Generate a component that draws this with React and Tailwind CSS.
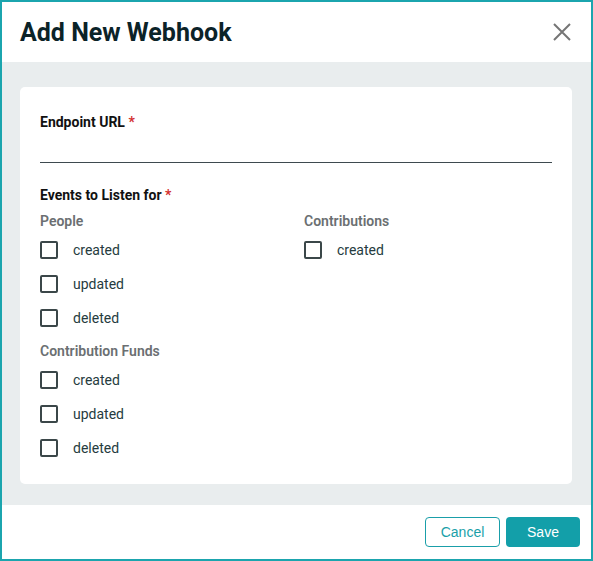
const groups = [
  { title: 'People', events: ['created', 'updated', 'deleted'] },
  { title: 'Contributions', events: ['created'] },
  { title: 'Contribution Funds', events: ['created', 'updated', 'deleted'] },
]

function Check({ label }) {
  return (
    <label className="flex items-center h-[34px] cursor-pointer">
      <span className="w-[18px] h-[18px] border-2 border-[#3b4749] rounded-[2px] shrink-0" />
      <span className="ml-[15px] text-[14px] text-[#263b40]">{label}</span>
    </label>
  )
}

function Group({ group }) {
  return (
    <div>
      <div className="text-[14px] leading-5 font-semibold text-[#6b6f72] mb-[2px]">{group.title}</div>
      {group.events.map((e) => (
        <Check key={e} label={e} />
      ))}
    </div>
  )
}

export default function App() {
  return (
    <div className="w-[593px] h-[561px] bg-white border-2 border-[#1ba5ae] flex flex-col font-['Roboto',sans-serif]">
      <div className="h-[60px] flex items-center justify-between pl-[18px] pr-[19px] pt-[2px] shrink-0">
        <h1 className="text-[25px] font-bold text-[#0b2328]">Add New Webhook</h1>
        <button className="text-[#757575] -mt-[2px]">
          <svg width="20" height="20" viewBox="0 0 20 20" fill="none" stroke="currentColor" strokeWidth="2">
            <path d="M2 2 L18 18 M18 2 L2 18" />
          </svg>
        </button>
      </div>

      <div className="bg-[#e9edee] h-[443px] pl-[18px] pr-[19px] pt-[25px] shrink-0">
        <div className="bg-white rounded-[5px] h-[397px] px-5 pt-[25px]">
          <div className="text-[14px] leading-5 font-bold text-[#111]">
            Endpoint URL <span className="text-[#d32f2f]">*</span>
          </div>
          <input className="block w-full h-[31px] border-b border-[#3e4a4f] outline-none" />

          <div className="mt-[22px] text-[14px] leading-5 font-bold text-[#111]">
            Events to Listen for <span className="text-[#d32f2f]">*</span>
          </div>
          <div className="grid grid-cols-2 gap-x-4 mt-[6px]">
            <div className="flex flex-col gap-[6px]">
              <Group group={groups[0]} />
              <Group group={groups[2]} />
            </div>
            <div>
              <Group group={groups[1]} />
            </div>
          </div>
        </div>
      </div>

      <div className="flex-1 flex items-center justify-end gap-[6px] pr-[11px]">
        <button className="w-[75px] h-[30px] rounded-[4px] border border-[#1a9fa9] text-[#1a9fa9] text-[14px] font-['Liberation_Sans',sans-serif]">
          Cancel
        </button>
        <button className="w-[74px] h-[30px] rounded-[4px] bg-[#139fa9] text-white text-[14px] font-['Liberation_Sans',sans-serif]">
          Save
        </button>
      </div>
    </div>
  )
}
